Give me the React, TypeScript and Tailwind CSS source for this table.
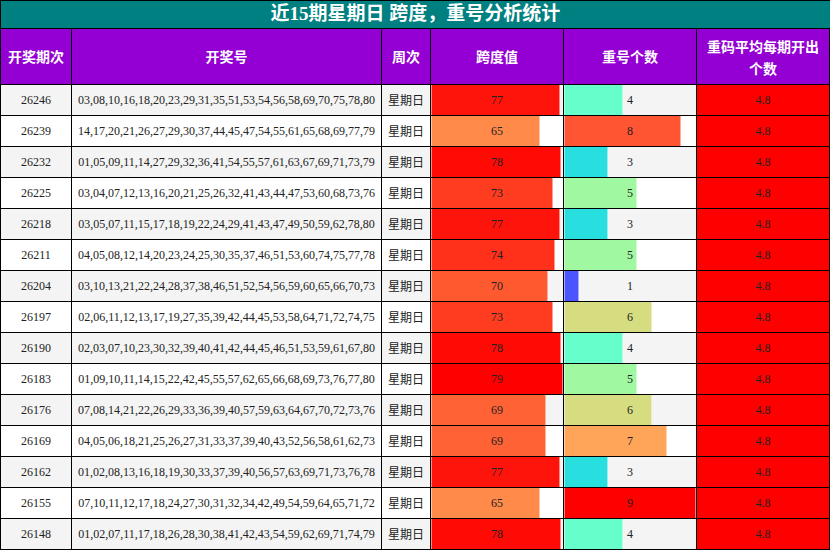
const rows = [
  { issue: '26246', nums: '03,08,10,16,18,20,23,29,31,35,51,53,54,56,58,69,70,75,78,80', span: 77, rep: 4 },
  { issue: '26239', nums: '14,17,20,21,26,27,29,30,37,44,45,47,54,55,61,65,68,69,77,79', span: 65, rep: 8 },
  { issue: '26232', nums: '01,05,09,11,14,27,29,32,36,41,54,55,57,61,63,67,69,71,73,79', span: 78, rep: 3 },
  { issue: '26225', nums: '03,04,07,12,13,16,20,21,25,26,32,41,43,44,47,53,60,68,73,76', span: 73, rep: 5 },
  { issue: '26218', nums: '03,05,07,11,15,17,18,19,22,24,29,41,43,47,49,50,59,62,78,80', span: 77, rep: 3 },
  { issue: '26211', nums: '04,05,08,12,14,20,23,24,25,30,35,37,46,51,53,60,74,75,77,78', span: 74, rep: 5 },
  { issue: '26204', nums: '03,10,13,21,22,24,28,37,38,46,51,52,54,56,59,60,65,66,70,73', span: 70, rep: 1 },
  { issue: '26197', nums: '02,06,11,12,13,17,19,27,35,39,42,44,45,53,58,64,71,72,74,75', span: 73, rep: 6 },
  { issue: '26190', nums: '02,03,07,10,23,30,32,39,40,41,42,44,45,46,51,53,59,61,67,80', span: 78, rep: 4 },
  { issue: '26183', nums: '01,09,10,11,14,15,22,42,45,55,57,62,65,66,68,69,73,76,77,80', span: 79, rep: 5 },
  { issue: '26176', nums: '07,08,14,21,22,26,29,33,36,39,40,57,59,63,64,67,70,72,73,76', span: 69, rep: 6 },
  { issue: '26169', nums: '04,05,06,18,21,25,26,27,31,33,37,39,40,43,52,56,58,61,62,73', span: 69, rep: 7 },
  { issue: '26162', nums: '01,02,08,13,16,18,19,30,33,37,39,40,56,57,63,69,71,73,76,78', span: 77, rep: 3 },
  { issue: '26155', nums: '07,10,11,12,17,18,24,27,30,31,32,34,42,49,54,59,64,65,71,72', span: 65, rep: 9 },
  { issue: '26148', nums: '01,02,07,11,17,18,26,28,30,38,41,42,43,54,59,62,69,71,74,79', span: 78, rep: 4 },
];

const repColors: Record<number, string> = {
  1: '#4a55ff',
  2: '#3a9cf0',
  3: '#29dede',
  4: '#66ffcc',
  5: '#a0f8a0',
  6: '#d5dd80',
  7: '#ffa55a',
  8: '#ff5533',
  9: '#ff0000',
};

// span bars shade from orange (65) to pure red (79)
const spanColor = (v: number) => {
  const t = Math.max(0, Math.min(1, (79 - v) / 14));
  return `rgb(255, ${Math.round(138 * t)}, ${Math.round(74 * t)})`;
};

const serif = { fontFamily: '"Liberation Serif", "Noto Sans CJK SC", serif' };
const cjk = { fontFamily: '"Noto Sans CJK SC", sans-serif' };

function Bar({ pct, color, label }: { pct: number; color: string; label: number }) {
  return (
    <div className="relative h-full w-full">
      <div
        className="absolute inset-y-0 left-0 border-x border-white/50"
        style={{ width: `${pct}%`, backgroundColor: color }}
      />
      <div className="relative flex h-full items-center justify-center">{label}</div>
    </div>
  );
}

export default function App() {
  return (
    <div className="w-[830px] h-[550px] overflow-hidden bg-white text-[12px] text-[#222]" style={serif}>
      <div className="flex h-[29px] items-center justify-center border-y border-l border-black bg-[#008080] text-[19px] font-bold text-white">
        近15期星期日 跨度，重号分析统计
      </div>

      <div className="flex h-[56px] border-l border-black bg-[#9400d3] text-[14px] font-bold text-white" style={cjk}>
        <div className="flex w-[71px] items-center justify-center border-r border-b border-black">开奖期次</div>
        <div className="flex w-[310px] items-center justify-center border-r border-b border-black">开奖号</div>
        <div className="flex w-[49px] items-center justify-center border-r border-b border-black">周次</div>
        <div className="flex w-[133px] items-center justify-center border-r border-b border-black">跨度值</div>
        <div className="flex w-[133px] items-center justify-center border-r border-b border-black">重号个数</div>
        <div className="flex w-[133px] items-center justify-center border-r border-b border-black px-2 text-center leading-[22px]">
          重码平均每期开出个数
        </div>
      </div>

      {rows.map((r, i) => (
        <div
          key={r.issue}
          className={`flex h-[31px] border-l border-black ${i % 2 === 0 ? 'bg-[#f4f4f4]' : 'bg-white'}`}
        >
          <div className="flex w-[71px] items-center justify-center border-r border-b border-black">{r.issue}</div>
          <div className="flex w-[310px] items-center justify-center border-r border-b border-black whitespace-nowrap">
            {r.nums}
          </div>
          <div className="flex w-[49px] items-center justify-center border-r border-b border-black" style={cjk}>
            星期日
          </div>
          <div className="w-[133px] border-r border-b border-black">
            <Bar pct={(r.span / 79) * 100} color={spanColor(r.span)} label={r.span} />
          </div>
          <div className="w-[133px] border-r border-b border-black">
            <Bar pct={(r.rep / 9) * 100} color={repColors[r.rep]} label={r.rep} />
          </div>
          <div className="flex w-[133px] items-center justify-center border-r border-b border-black bg-[#ff0000]">
            4.8
          </div>
        </div>
      ))}
    </div>
  );
}
